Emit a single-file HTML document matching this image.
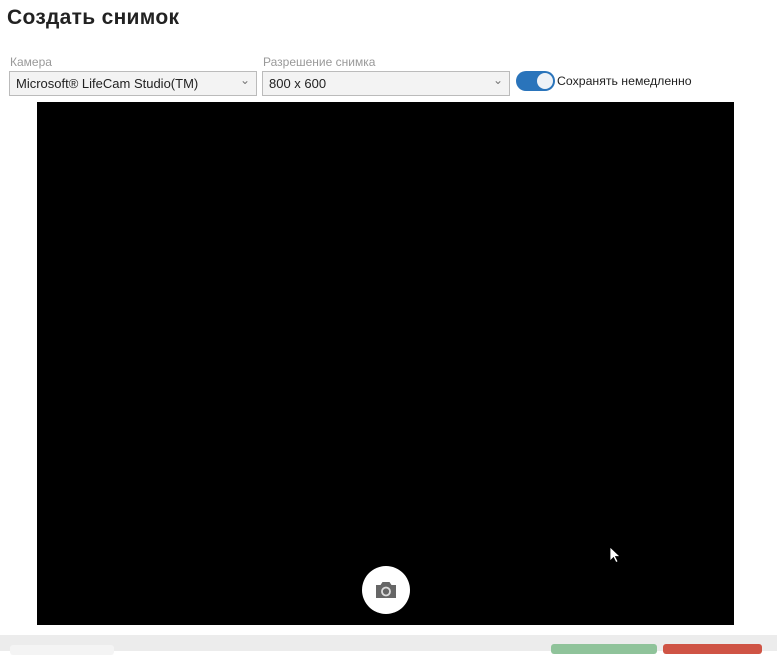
<!DOCTYPE html>
<html><head><meta charset="utf-8"><style>
*{margin:0;padding:0;box-sizing:border-box}
body{width:777px;height:651px;overflow:hidden;background:#fff;font-family:"Liberation Sans","DejaVu Sans",sans-serif;position:relative}
.t{position:absolute;left:7px;top:6px;font-size:21px;font-weight:bold;color:#222;letter-spacing:0.3px}
.l{position:absolute;top:55px;font-size:12px;color:#999}
.s{position:absolute;top:71px;height:25px;border:1px solid #bbb;background:#f3f3f3;font-size:13px;color:#222;padding:4px 6px}
.s:after{content:"⌄";position:absolute;right:6px;top:1px;font-size:12px;color:#777}
.v{position:absolute;left:37px;top:102px;width:697px;height:523px;background:#000}
.cb{position:absolute;left:362px;top:566px;width:48px;height:48px;border-radius:50%;background:#fff}
.f{position:absolute;left:0;top:635px;width:777px;height:16px;background:#ececec}
</style></head><body>
<div class="t">Создать снимок</div>
<div class="l" style="left:10px">Камера</div>
<div class="l" style="left:263px">Разрешение снимка</div>
<div class="s" style="left:9px;width:248px">Microsoft® LifeCam Studio(TM)</div>
<div class="s" style="left:262px;width:248px">800 x 600</div>
<div style="position:absolute;left:516px;top:71px;width:39px;height:20px;border-radius:10px;background:#2a74bb"></div>
<div style="position:absolute;left:537px;top:73px;width:16px;height:16px;border-radius:50%;background:#eef2f7"></div>
<div style="position:absolute;left:557px;top:74px;font-size:12.3px;color:#222">Сохранять немедленно</div>
<div class="v"></div>
<div class="cb"><svg width="48" height="48" viewBox="0 0 48 48"><path d="M14 19h4.5l2-3h7l2 3H34v13H14z" fill="#666"/><circle cx="24" cy="25.5" r="4" fill="none" stroke="#ddd" stroke-width="1.8"/></svg></div>
<svg style="position:absolute;left:609px;top:546px" width="12" height="18" viewBox="0 0 12 18"><path d="M1 1v14l3.5-3.5 2.5 5 2-1-2.5-5H11z" fill="#fff" stroke="#000" stroke-width=".8"/></svg>
<div class="f"></div>
<div style="position:absolute;left:10px;top:645px;width:104px;height:10px;background:#f4f4f4;border-radius:3px"></div>
<div style="position:absolute;left:551px;top:644px;width:106px;height:10px;background:#8fc39a;border-radius:3px"></div>
<div style="position:absolute;left:663px;top:644px;width:99px;height:10px;background:#cf5445;border-radius:3px"></div>
</body></html>
